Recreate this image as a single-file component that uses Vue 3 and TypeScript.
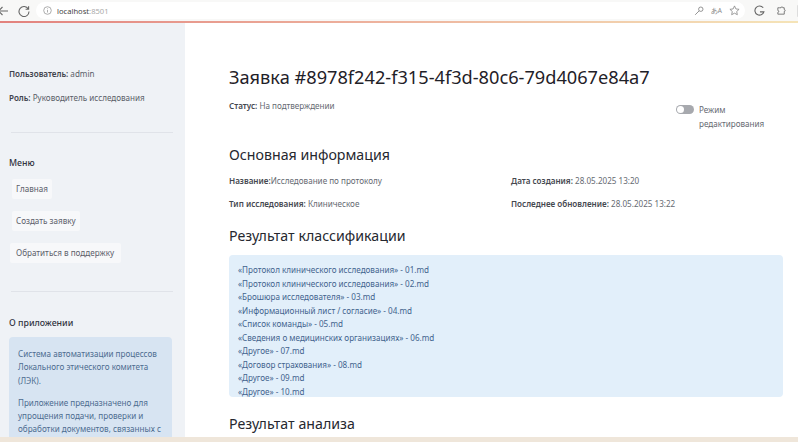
<script setup lang="ts">
const menu: string[] = ['Главная', 'Создать заявку', 'Обратиться в поддержку']
const files: string[] = [
  '«Протокол клинического исследования» - 01.md',
  '«Протокол клинического исследования» - 02.md',
  '«Брошюра исследователя» - 03.md',
  '«Информационный лист / согласие» - 04.md',
  '«Список команды» - 05.md',
  '«Сведения о медицинских организациях» - 06.md',
  '«Другое» - 07.md',
  '«Договор страхования» - 08.md',
  '«Другое» - 09.md',
  '«Другое» - 10.md',
]
</script>

<template>
  <div class="window">
    <header class="chrome">
      <svg class="ic back" width="12" height="12" viewBox="0 0 12 12"><path d="M11 6H1.500M5.500 2L1.500 6l4 4" /></svg>
      <svg class="ic reload" width="12" height="12" viewBox="0 0 12 12"><path d="M10.300 4A5 5 0 1 0 11 6.500M10.600 1.200V4.200H7.600" /></svg>
      <div class="address">
        <svg class="info" width="9" height="9" viewBox="0 0 9 9"><circle cx="4.500" cy="4.500" r="3.800" /><path d="M4.500 4v2.500M4.500 2.400v.8" /></svg>
        <span class="host">localhost</span><span class="port">:8501</span>
        <span class="spacer"></span>
        <svg class="tool key" width="10" height="10" viewBox="0 0 10 10"><circle cx="6.800" cy="3.200" r="2.200" /><path d="M5.200 4.800L1.200 8.800" /></svg>
        <span class="translate">あA</span>
        <svg class="tool" width="11" height="11" viewBox="0 0 12 12"><path d="M6 1l1.500 3.300 3.500.4-2.600 2.400.7 3.500L6 8.900l-3.100 1.700.7-3.500L1 4.700l3.500-.4z" /></svg>
      </div>
      <svg class="tool g" width="11" height="11" viewBox="0 0 12 12"><path d="M10 3A5 5 0 1 0 10.800 7.500H6.500" /></svg>
      <svg class="tool ext" width="11" height="11" viewBox="0 0 12 12"><path d="M4 3h1.500a1 1 0 0 1 2 0H9v2a1 1 0 0 1 0 2v3H2V8a1 1 0 0 0 0-2V3z" /></svg>
      <span class="avatar"></span>
    </header>
    <div class="accent"></div>

    <div class="app">
      <aside class="sidebar">
        <p class="line"><b>Пользователь:</b> admin</p>
        <p class="line role"><b>Роль:</b> Руководитель исследования</p>
        <hr class="rule rule-a" />
        <h4 class="side-title">Меню</h4>
        <nav class="menu">
          <a v-for="m in menu" :key="m" class="menu-btn">{{ m }}</a>
        </nav>
        <hr class="rule rule-b" />
        <h4 class="side-title about">О приложении</h4>
        <div class="about-box">
          <p>Система автоматизации процессов Локального этического комитета (ЛЭК).</p>
          <p>Приложение предназначено для упрощения подачи, проверки и обработки документов, связанных с</p>
        </div>
      </aside>

      <main class="content">
        <div class="title-row">
          <h1>Заявка #8978f242-f315-4f3d-80c6-79d4067e84a7</h1>
        </div>
        <div class="status-row">
          <p class="text"><b>Статус:</b> На подтверждении</p>
          <div class="toggle-wrap">
            <span class="toggle"><span class="knob"></span></span>
            <span class="toggle-label">Режим<br />редактирования</span>
          </div>
        </div>
        <h2 class="h-main">Основная информация</h2>
        <div class="info-grid">
          <p class="text"><b>Название:</b>Исследование по протоколу</p>
          <p class="text"><b>Дата создания:</b> 28.05.2025 13:20</p>
          <p class="text"><b>Тип исследования:</b> Клиническое</p>
          <p class="text"><b>Последнее обновление:</b> 28.05.2025 13:22</p>
        </div>
        <h2 class="h-class">Результат классификации</h2>
        <div class="result-box">
          <div v-for="f in files" :key="f" class="file">{{ f }}</div>
        </div>
        <h2 class="h-analysis">Результат анализа</h2>
      </main>
    </div>
    <div class="bottom"></div>
  </div>
</template>

<style>
html, body { margin: 0; overflow: hidden; background: #fff; }
</style>

<style scoped>
.window {
  position: relative;
  width: 798px;
  height: 442px;
  display: flex;
  flex-direction: column;
  overflow: hidden;
  font-family: "Noto Sans", "Open Sans", sans-serif;
  color: #555a64;
  font-size: 8.1px;
}
.chrome {
  height: 21px;
  flex: none;
  display: flex;
  align-items: center;
  background: #f8f8f7;
}
.ic { fill: none; stroke: #666; stroke-width: 1.1; flex: none; }
.back { margin-left: -3px; }
.reload { margin-left: 9px; }
.address {
  margin-left: 6px;
  width: 709px;
  height: 17px;
  flex: none;
  display: flex;
  align-items: center;
  background: #fff;
  border-radius: 9px;
  padding: 0 5px 0 7px;
  box-sizing: border-box;
}
.info { fill: none; stroke: #999; stroke-width: .8; margin-right: 5px; flex: none; }
.host { color: #444; font-size: 7.6px; }
.port { color: #aaa; font-size: 7.6px; }
.spacer { flex: 1; }
.tool { fill: none; stroke: #888; stroke-width: .9; flex: none; }
.translate { color: #888; font-size: 6.500px; margin: 0 7px; }
.g { margin-left: 9px; stroke: #666; stroke-width: 1.2; }
.ext { margin-left: 11px; stroke: #666; }
.avatar { width: 5px; height: 12px; margin-left: 10px; background: #ddd; border-radius: 3px 0 0 3px; }
.accent {
  height: 2px;
  flex: none;
  background: linear-gradient(90deg, #e2827e, #edb09c 45%, #f5e4b8);
}
.app { flex: 1; min-height: 0; display: flex; }
.sidebar {
  width: 185px;
  flex: none;
  box-sizing: border-box;
  padding: 45px 9px 0;
  background: #eff2f6;
  overflow: hidden;
}
.line { margin: 0; line-height: 12px; color: #5a5e68; }
.line b { color: #3f434c; font-weight: 600; }
.role { margin-top: 12px; }
.rule { border: 0; border-top: 1px solid #e0e3e9; margin: 0 3px 0 2px; }
.rule-a { margin-top: 28px; }
.side-title { margin: 0; font-size: 8.800px; font-weight: 500; color: #31333f; line-height: 12px; }
.rule-a + .side-title { margin-top: 24px; }
.menu { display: flex; flex-direction: column; align-items: flex-start; gap: 12px; margin-top: 10px; }
.menu-btn {
  margin-left: 3px;
  padding: 0 4px;
  height: 20px;
  line-height: 20px;
  background: #f7f8fa;
  color: #5c606a;
  border-radius: 2px;
}
.menu-btn:last-child { margin-left: 1px; padding: 0 7px 0 6px; }
.rule-b { margin-top: 28px; }
.about { margin-top: 25px; }
.about-box {
  margin: 8px 4px 0 0;
  padding: 10px 9px;
  background: #d7e4f2;
  border-radius: 4px;
  color: #4d6c90;
  line-height: 13.300px;
}
.about-box p { margin: 0; }
.about-box p + p { margin-top: 9px; }
.content {
  flex: 1;
  min-width: 0;
  box-sizing: border-box;
  padding: 0 15px 0 44px;
  background: #fff;
  overflow: hidden;
}
.title-row { padding-top: 41px; }
h1 { margin: 0; font-size: 18.200px; font-weight: 400; color: #1f2128; line-height: 26px; white-space: nowrap; }
.status-row { display: flex; justify-content: space-between; align-items: flex-start; margin-top: 10px; }
.text { margin: 0; line-height: 12px; color: #666a72; }
.text b { font-weight: 600; color: #45484f; }
.toggle-wrap { width: 107px; display: flex; align-items: flex-start; gap: 5px; margin-top: 3px; }
.toggle { width: 18px; height: 9px; border-radius: 5px; background: #a7a9ae; display: block; position: relative; margin-top: 2px; flex: none; }
.knob { position: absolute; left: 1px; top: 1px; width: 7px; height: 7px; border-radius: 50%; background: #fff; }
.toggle-label { line-height: 14px; color: #666a72; }
h2 { margin: 0; font-size: 14.200px; font-weight: 400; color: #26282f; line-height: 20px; white-space: nowrap; }
.h-main { margin-top: 14px; }
.info-grid { display: grid; grid-template-columns: 282px 1fr; row-gap: 11px; margin-top: 10px; }
.h-class { margin-top: 16px; }
.result-box {
  margin-top: 9px;
  padding: 8px 9px 0;
  height: 142px;
  box-sizing: border-box;
  background: #e2effa;
  border-radius: 4px;
  color: #43648e;
}
.file { line-height: 13.550px; white-space: nowrap; }
.h-analysis { margin-top: 17px; }
.bottom { position: absolute; left: 0; top: 437px; width: 798px; height: 5px; background: #efe6da; }
</style>
